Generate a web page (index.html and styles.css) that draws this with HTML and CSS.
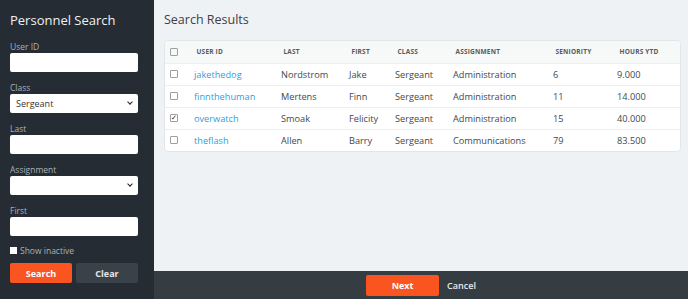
FILE: index.html
```html
<!DOCTYPE html>
<html lang="en">
<head>
    <meta charset="UTF-8">
    <title>Personnel Search</title>
    <link rel="stylesheet" href="styles.css">
</head>
<body>
    <div class="app">
        <aside class="sidebar">
            <h2>Personnel Search</h2>
            <label class="lbl">User ID</label>
            <input type="text" class="field">
            <label class="lbl">Class</label>
            <div class="select">Sergeant<span class="caret"></span></div>
            <label class="lbl">Last</label>
            <input type="text" class="field">
            <label class="lbl">Assignment</label>
            <div class="select"><span class="caret"></span></div>
            <label class="lbl">First</label>
            <input type="text" class="field">
            <div class="inactive"><span class="box"></span>Show inactive</div>
            <div class="btns">
                <button class="btn-search">Search</button>
                <button class="btn-clear">Clear</button>
            </div>
        </aside>
        <main class="main">
            <div class="content">
                <h1>Search Results</h1>
                <div class="card">
                    <table>
                        <thead>
                            <tr>
                                <th class="c-chk"><span class="cb"></span></th>
                                <th class="c-id">User ID</th>
                                <th class="c-last">Last</th>
                                <th class="c-first">First</th>
                                <th class="c-class">Class</th>
                                <th class="c-asg">Assignment</th>
                                <th class="c-sen">Seniority</th>
                                <th>Hours YTD</th>
                            </tr>
                        </thead>
                        <tbody>
                            <tr>
                                <td><span class="cb"></span></td>
                                <td><a href="#">jakethedog</a></td>
                                <td>Nordstrom</td>
                                <td>Jake</td>
                                <td>Sergeant</td>
                                <td>Administration</td>
                                <td>6</td>
                                <td>9.000</td>
                            </tr>
                            <tr>
                                <td><span class="cb"></span></td>
                                <td><a href="#">finnthehuman</a></td>
                                <td>Mertens</td>
                                <td>Finn</td>
                                <td>Sergeant</td>
                                <td>Administration</td>
                                <td>11</td>
                                <td>14.000</td>
                            </tr>
                            <tr>
                                <td><span class="cb checked">&#10003;</span></td>
                                <td><a href="#">overwatch</a></td>
                                <td>Smoak</td>
                                <td>Felicity</td>
                                <td>Sergeant</td>
                                <td>Administration</td>
                                <td>15</td>
                                <td>40.000</td>
                            </tr>
                            <tr>
                                <td><span class="cb"></span></td>
                                <td><a href="#">theflash</a></td>
                                <td>Allen</td>
                                <td>Barry</td>
                                <td>Sergeant</td>
                                <td>Communications</td>
                                <td>79</td>
                                <td>83.500</td>
                            </tr>
                        </tbody>
                    </table>
                </div>
            </div>
            <footer class="footer">
                <button class="btn-next">Next</button>
                <span class="cancel">Cancel</span>
            </footer>
        </main>
    </div>
</body>
</html>
```

FILE: styles.css
```css
*{
    box-sizing: border-box;
}
body{
    margin: 0;
    font-family: "Open Sans", Arial, sans-serif;
    background-color: #eff2f4;
}
.app{
    display: flex;
    height: 299px;
}
.sidebar{
    width: 154px;
    background-color: #262c33;
    padding: 11px 16px 0 10px;
    display: flex;
    flex-direction: column;
}
.sidebar h2{
    margin: 0 0 11px;
    font-size: 13px;
    font-weight: 400;
    color: #eef0f2;
    line-height: 18px;
}
.lbl{
    display: block;
    font-size: 8.5px;
    color: #aab0b6;
    line-height: 10px;
    height: 12px;
    padding-top: 2px;
    margin-bottom: 1px;
}
.field, .select{
    display: block;
    height: 19px;
    border: none;
    padding: 0;
    border-radius: 2px;
    background-color: #fff;
    margin: 0 0 9px;
    width: 128px;
    flex: none;
}
.select{
    position: relative;
    font-size: 9px;
    color: #333;
    line-height: 19px;
    padding-left: 6px;
}
.caret{
    position: absolute;
    right: 6px;
    top: 6px;
    width: 4px;
    height: 4px;
    border-right: 1.5px solid #222;
    border-bottom: 1.5px solid #222;
    transform: rotate(45deg);
}
.inactive{
    display: flex;
    align-items: center;
    font-size: 8.5px;
    color: #aab0b6;
    height: 10px;
    margin-top: 0;
}
.inactive .box{
    width: 7px;
    height: 7px;
    background-color: #fff;
    margin-right: 3px;
}
.btns{
    display: flex;
    gap: 4px;
    margin-top: 8px;
}
.btns button, .btn-next{
    font-family: "Open Sans", Arial, sans-serif;
    font-weight: 700;
    font-size: 9px;
    border: none;
    border-radius: 2px;
    height: 20px;
    width: 62px;
    color: #fff;
}
.btn-search{
    background-color: #fa5420;
}
.btn-clear{
    background-color: #3a4249;
    color: #e5e7e9 !important;
}
.main{
    flex: 1;
    display: flex;
    flex-direction: column;
}
.content{
    flex: 1;
    padding: 11px 7px 0 10px;
}
.content h1{
    margin: 0 0 11px;
    font-size: 12.5px;
    font-weight: 400;
    color: #3c4147;
    line-height: 18px;
}
.card{
    background-color: #fff;
    border: 1px solid #e3e6e8;
    border-radius: 4px;
    overflow: hidden;
}
table{
    width: 100%;
    border-collapse: collapse;
}
th{
    background-color: #f7f8f8;
    font-size: 6.5px;
    font-weight: 700;
    text-transform: uppercase;
    color: #555b61;
    text-align: left;
    height: 22px;
    padding: 0 0 0 2.5px;
    letter-spacing: 0.2px;
}
th.c-chk{
    padding: 0;
}
td{
    font-size: 9.2px;
    color: #42484e;
    height: 22px;
    padding: 0;
    border-top: 1px solid #eceef0;
}
td a{
    color: #2d9fe0;
    text-decoration: none;
}
.c-chk{ width: 29px; }
.c-id{ width: 87px; }
.c-last{ width: 68px; }
.c-first{ width: 46px; }
.c-class{ width: 58px; }
.c-asg{ width: 100px; }
.c-sen{ width: 64px; }
.cb{
    display: block;
    width: 8px;
    height: 8px;
    border: 1px solid #9aa0a5;
    border-radius: 1px;
    margin-left: 5px;
    font-size: 7px;
    line-height: 6px;
    color: #222;
    text-align: center;
}
.footer{
    height: 28px;
    background-color: #353d43;
    display: flex;
    align-items: center;
    justify-content: center;
    gap: 8px;
}
.btn-next{
    width: 73px;
    height: 21px;
    background-color: #fa5420;
}
.cancel{
    font-size: 9px;
    font-weight: 600;
    color: #e8eaec;
}
```
